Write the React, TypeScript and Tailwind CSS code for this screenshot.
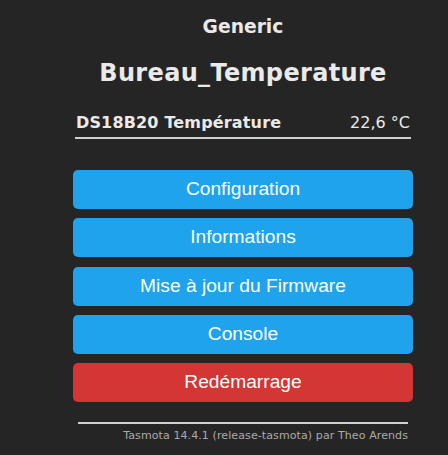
const buttons = [
  { label: 'Configuration', color: 'bg-[#1fa3ec]' },
  { label: 'Informations', color: 'bg-[#1fa3ec]' },
  { label: 'Mise à jour du Firmware', color: 'bg-[#1fa3ec]' },
  { label: 'Console', color: 'bg-[#1fa3ec]' },
  { label: 'Redémarrage', color: 'bg-[#d43535]' },
];

export default function App() {
  return (
    <div className="w-[448px] h-[455px] overflow-hidden bg-[#252525] text-[#eaeaea] font-['DejaVu_Sans',Verdana,sans-serif]">
      <div className="ml-[73px] w-[340px] pt-[14.5px]">
        <div className="text-center font-bold text-[18.72px] leading-[24px]">Generic</div>
        <div className="mt-[19.2px] text-center font-bold text-[24px] leading-[30px] tracking-[0.33px]">Bureau_Temperature</div>

        <div className="mt-[25.8px] flex justify-between px-[3px] text-[16px] leading-[20px]">
          <span className="font-bold tracking-[0.16px]">DS18B20 Température</span>
          <span>22,6 °C</span>
        </div>
        <div className="mt-[3.5px] mx-[2px] h-[2px] bg-[#d0d0d0]" />

        <div className="mt-[31px] flex flex-col gap-[9.3px]">
          {buttons.map((b) => (
            <button
              key={b.label}
              type="button"
              className={`h-[39px] w-full rounded-[5px] ${b.color} text-[#faffff] text-[19.2px] font-['Liberation_Sans',Arial,sans-serif]`}
            >
              {b.label}
            </button>
          ))}
        </div>

        <div className="mt-[20px] mx-[5px] h-[2px] bg-[#d0d0d0]" />
        <div className="mt-[5px] pr-[5px] text-right text-[11px] leading-[13px] tracking-[0.1px] text-[#aaaaaa]">
          Tasmota 14.4.1 (release-tasmota) par Theo Arends
        </div>
      </div>
    </div>
  );
}
